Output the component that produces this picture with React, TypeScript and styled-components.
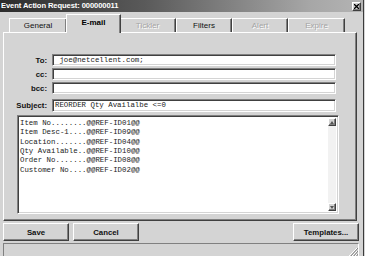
import React from 'react';
import styled, { createGlobalStyle, css } from 'styled-components';

const GlobalStyle = createGlobalStyle`
  html, body {
    margin: 0;
    padding: 0;
    background: #d4d4d4;
    overflow: hidden;
  }
  body {
    font-family: 'Liberation Sans', Arial, sans-serif;
  }
`;

const tabs = [
  { label: 'General', width: 58, state: 'normal' },
  { label: 'E-mail', width: 55, state: 'active' },
  { label: 'Tickler', width: 57, state: 'disabled' },
  { label: 'Filters', width: 56, state: 'normal' },
  { label: 'Alert', width: 56, state: 'disabled' },
  { label: 'Expire', width: 57, state: 'disabled' },
];

const fields = [
  { label: 'To:', value: ' joe@netcellent.com;' },
  { label: 'cc:', value: '' },
  { label: 'bcc:', value: '' },
  { label: 'Subject:', value: 'REORDER Qty Availalbe <=0' },
];

const bodyLines = [
  'Item No........@@REF-ID01@@',
  'Item Desc-1....@@REF-ID09@@',
  'Location.......@@REF-ID04@@',
  'Qty Available..@@REF-ID10@@',
  'Order No.......@@REF-ID08@@',
  'Customer No....@@REF-ID02@@',
];

const raised = css`
  border-top: 1px solid #ffffff;
  border-left: 1px solid #ffffff;
  border-right: 1px solid #404040;
  border-bottom: 1px solid #404040;
  box-shadow: inset -1px -1px 0 #808080;
`;

const sunken = css`
  border-top: 1px solid #808080;
  border-left: 1px solid #808080;
  border-right: 1px solid #ffffff;
  border-bottom: 1px solid #ffffff;
  box-shadow: inset 1px 1px 0 #404040, inset -1px -1px 0 #d4d4d4;
`;

const Window = styled.div`
  width: 364px;
  height: 256px;
  display: flex;
  flex-direction: column;
  border-right: 1px solid #3a3a3a;
  box-sizing: border-box;
  overflow: hidden;
`;

const TitleBar = styled.div`
  height: 12px;
  flex: none;
  display: flex;
  align-items: center;
  justify-content: space-between;
  padding: 0 2px 0 1px;
  background: linear-gradient(to right, #2c2c2c 0%, #5a5a5a 40%, #a6a6a6 85%, #b4b4b4 100%);
`;

const TitleText = styled.span`
  color: #ffffff;
  font-weight: bold;
  font-size: 7.6px;
  letter-spacing: -0.1px;
  line-height: 12px;
  white-space: nowrap;
`;

const CloseButton = styled.div`
  width: 9px;
  height: 9px;
  box-sizing: border-box;
  background: #d4d4d4;
  ${raised};
  display: flex;
  align-items: center;
  justify-content: center;
`;

const Body = styled.div`
  flex: 1;
  display: flex;
  flex-direction: column;
  padding: 0 4px 0 3px;
`;

const TabStrip = styled.div`
  height: 20px;
  display: flex;
  align-items: flex-end;
  padding-left: 6px;
`;

const Tab = styled.div<{ $state: string; $width: number }>`
  width: ${p => p.$width}px;
  box-sizing: border-box;
  height: ${p => (p.$state === 'active' ? 18 : 14)}px;
  display: flex;
  align-items: center;
  justify-content: center;
  font-size: 8px;
  background: #d4d4d4;
  border-top: 1px solid #ffffff;
  border-left: 1px solid #ffffff;
  border-right: 1px solid #404040;
  box-shadow: inset -1px 0 0 #808080;
  position: relative;
  ${p =>
    p.$state === 'active'
      ? css`
          font-weight: bold;
          color: #000;
          margin: 0 -2px 0 -1px;
          padding-bottom: 3px;
          z-index: 1;
          margin-bottom: -1px;
          height: 19px;
        `
      : p.$state === 'disabled'
      ? css`
          color: #a4a4a4;
          text-shadow: 1px 1px 0 #ffffff;
        `
      : css`
          color: #111;
        `}
`;

const Panel = styled.div`
  height: 189px;
  box-sizing: border-box;
  width: 354px;
  ${raised};
  padding-top: 21px;
  display: flex;
  flex-direction: column;
`;

const FieldGrid = styled.div`
  display: grid;
  grid-template-columns: 43px 284px;
  column-gap: 5px;
  row-gap: 2px;
  align-items: center;
`;

const Label = styled.label<{ $gapAbove?: boolean }>`
  text-align: right;
  font-weight: bold;
  font-size: 7.8px;
  color: #111;
  ${p => p.$gapAbove && 'margin-top: 3px;'}
`;

const Field = styled.div<{ $gapAbove?: boolean }>`
  height: 12px;
  box-sizing: border-box;
  background: #ffffff;
  ${sunken};
  font-family: 'Liberation Mono', 'Courier New', monospace;
  font-size: 7.4px;
  line-height: 10px;
  padding-left: 2px;
  white-space: pre;
  color: #222;
  ${p => p.$gapAbove && 'margin-top: 3px; height: 13px; line-height: 11px;'}
`;

const MessageBox = styled.div`
  margin: 3px 0 0 13px;
  width: 322px;
  height: 99px;
  box-sizing: border-box;
  background: #ffffff;
  ${sunken};
  display: flex;
`;

const MessageText = styled.pre`
  flex: 1;
  margin: 0;
  padding: 3px 0 0 2px;
  font-family: 'Liberation Mono', 'Courier New', monospace;
  font-size: 7.4px;
  line-height: 9.33px;
  color: #222;
`;

const ScrollBar = styled.div`
  width: 8px;
  margin: 2px 2px 2px 0;
  background: #f2f2f2;
  display: flex;
  flex-direction: column;
  justify-content: space-between;
`;

const ArrowButton = styled.div`
  width: 8px;
  height: 8px;
  box-sizing: border-box;
  background: #d4d4d4;
  ${raised};
  display: flex;
  align-items: center;
  justify-content: center;
`;

const ButtonRow = styled.div`
  display: flex;
  margin-top: 2px;
  height: 18px;
`;

const Button = styled.button<{ $width: number; $push?: boolean }>`
  width: ${p => p.$width}px;
  height: 18px;
  padding: 0;
  margin: 0 4px 0 0;
  ${p => p.$push && 'margin: 0 0 0 auto;'}
  background: #d4d4d4;
  ${raised};
  font-family: 'Liberation Sans', Arial, sans-serif;
  font-weight: bold;
  font-size: 7.8px;
  color: #111;
`;

const StatusBar = styled.div`
  margin-top: 2px;
  height: 14px;
  box-sizing: border-box;
  border-top: 1px solid #808080;
  border-left: 1px solid #808080;
  border-right: 1px solid #ffffff;
  display: flex;
  justify-content: flex-end;
  align-items: flex-end;
`;

const Grip = () => (
  <svg width="10" height="10" viewBox="0 0 10 10">
    <path d="M9 1 L1 9 M9 4 L4 9 M9 7 L7 9" stroke="#ffffff" strokeWidth="1" />
    <path d="M10 1 L2 10 M10 4 L5 10 M10 7 L8 10" stroke="#808080" strokeWidth="1" />
  </svg>
);

const Arrow = ({ up }: { up?: boolean }) => (
  <svg width="4" height="3" viewBox="0 0 4 3">
    <path d={up ? 'M0 3 L2 0 L4 3 Z' : 'M0 0 L2 3 L4 0 Z'} fill="#555" />
  </svg>
);

export default function App() {
  return (
    <>
      <GlobalStyle />
      <Window>
        <TitleBar>
          <TitleText>Event Action Request: 000000011</TitleText>
          <CloseButton>
            <svg width="5" height="5" viewBox="0 0 5 5">
              <path d="M0 0 L5 5 M5 0 L0 5" stroke="#000" strokeWidth="1.3" />
            </svg>
          </CloseButton>
        </TitleBar>
        <Body>
          <TabStrip>
            {tabs.map(t => (
              <Tab key={t.label} $state={t.state} $width={t.width}>
                {t.label}
              </Tab>
            ))}
          </TabStrip>
          <Panel>
            <FieldGrid>
              {fields.map((f, i) => (
                <React.Fragment key={f.label}>
                  <Label $gapAbove={i === 3}>{f.label}</Label>
                  <Field $gapAbove={i === 3}>{f.value}</Field>
                </React.Fragment>
              ))}
            </FieldGrid>
            <MessageBox>
              <MessageText>{bodyLines.join('\n')}</MessageText>
              <ScrollBar>
                <ArrowButton>
                  <Arrow up />
                </ArrowButton>
                <ArrowButton>
                  <Arrow />
                </ArrowButton>
              </ScrollBar>
            </MessageBox>
          </Panel>
          <ButtonRow>
            <Button $width={66}>Save</Button>
            <Button $width={66}>Cancel</Button>
            <Button $width={66} $push>
              Templates...
            </Button>
          </ButtonRow>
          <StatusBar>
            <Grip />
          </StatusBar>
        </Body>
      </Window>
    </>
  );
}
